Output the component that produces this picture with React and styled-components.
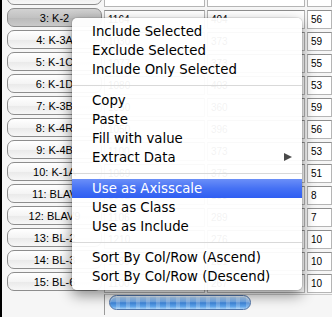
import React from 'react';
import styled, { createGlobalStyle } from 'styled-components';

const GlobalStyle = createGlobalStyle`
  html, body {
    margin: 0;
    padding: 0;
    background: #f6f6f6;
  }
  #root {
    width: 332px;
    height: 317px;
  }
`

const Window = styled.div`
  position: relative;
  display: flex;
  flex-direction: column;
  width: 330px;
  height: 317px;
  border-left: 2px solid #000;
  background: #f6f6f6;
  overflow: hidden;
  font-family: "Liberation Sans", Arial, sans-serif;
`

const Rows = styled.div`
  display: flex;
  flex-direction: column;
  margin-top: -14px;
  padding-left: 5px;
`

const Row = styled.div`
  display: grid;
  grid-template-columns: 95px 101px 98px 1fr;
  column-gap: 2px;
  align-items: start;
  height: 22px;
`

const RowButton = styled.div`
  display: flex;
  align-items: center;
  justify-content: center;
  height: 17px;
  border: 1px solid #8d8d8d;
  border-radius: 7px;
  background: ${p => p.$active
    ? 'linear-gradient(#d2d2d2, #c2c2c2 50%, #b9b9b9 51%, #cacaca)'
    : 'linear-gradient(#ffffff, #f4f4f4 50%, #e9e9e9 51%, #f7f7f7)'};
  color: #000;
  font-size: 11px;
  white-space: nowrap;
  overflow: hidden;
`

const Cell = styled.div`
  box-sizing: border-box;
  height: 19px;
  margin-top: 2px;
  padding: 3px 0 0 3px;
  background: #fff;
  border: 1px solid #b5b5b5;
  border-top-color: #8e8e8e;
  color: #000;
  font-size: 10px;
`

const Footer = styled.div`
  display: flex;
  align-items: flex-start;
  margin-left: 102px;
  height: 20px;
  border-top: 1px solid #c9c9c9;
  border-left: 1px solid #9a9a9a;
  padding: 0 0 0 4px;
`

const ProgressBar = styled.div`
  width: 140px;
  height: 13px;
  border: 1px solid #5074a8;
  border-radius: 8px;
  background:
    repeating-linear-gradient(90deg, rgba(255,255,255,0) 0 6px, rgba(255,255,255,0.22) 6px 10px),
    linear-gradient(#b9d8f7, #6ea8ea 45%, #3f86dc 52%, #5ea4ec 80%, #a8d2f8);
  box-shadow: inset 0 1px 1px rgba(255,255,255,0.6);
`

const Menu = styled.div`
  position: absolute;
  left: 70px;
  top: 18px;
  width: 230px;
  padding: 4px 0;
  background: rgba(255, 255, 255, 0.95);
  border-radius: 5px;
  box-shadow: 0 5px 14px rgba(0, 0, 0, 0.45), 0 0 0 1px rgba(0, 0, 0, 0.08);
  font-family: "DejaVu Sans", "Liberation Sans", sans-serif;
  font-size: 13.3px;
  color: #000;
`

const Item = styled.div`
  position: relative;
  display: flex;
  align-items: center;
  height: 19px;
  padding-left: 20px;
  color: ${p => p.$highlight ? '#fff' : '#000'};
  background: ${p => p.$highlight
    ? 'linear-gradient(#6b8ff8, #4571f4 50%, #2f5ef2)'
    : 'transparent'};
`

const Separator = styled.div`
  height: 12px;
  display: flex;
  align-items: center;
  &::after {
    content: '';
    flex: 1;
    height: 1px;
    background: #d9d9d9;
  }
`

const SubArrow = styled.span`
  position: absolute;
  right: 10px;
  top: 5px;
  width: 0;
  height: 0;
  border-top: 4.5px solid transparent;
  border-bottom: 4.5px solid transparent;
  border-left: 8px solid #4a4a4a;
`

// row 2 is scrolled almost out of view, so its texts are left blank
const rows = [
  { id: 2, label: '', a: '', b: '', c: '' },
  { id: 3, label: '3: K-2', a: '1164', b: '404', c: '56', active: true },
  { id: 4, label: '4: K-3A', a: '1030', b: '373', c: '59' },
  { id: 5, label: '5: K-1C', a: '1077', b: '373', c: '55' },
  { id: 6, label: '6: K-1D', a: '1080', b: '403', c: '53' },
  { id: 7, label: '7: K-3B', a: '1050', b: '360', c: '59' },
  { id: 8, label: '8: K-4R', a: '1050', b: '396', c: '56' },
  { id: 9, label: '9: K-4B', a: '1100', b: '373', c: '53' },
  { id: 10, label: '10: K-1A', a: '1069', b: '375', c: '51' },
  { id: 11, label: '11: BLAV', a: '1062', b: '183', c: '8' },
  { id: 12, label: '12: BLAV9', a: '1106', b: '289', c: '7' },
  { id: 13, label: '13: BL-2', a: '1210', b: '276', c: '10' },
  { id: 14, label: '14: BL-3', a: '1180', b: '281', c: '10' },
  { id: 15, label: '15: BL-6', a: '1100', b: '267', c: '10' },
];

const menu = [
  'Include Selected',
  'Exclude Selected',
  'Include Only Selected',
  '-',
  'Copy',
  'Paste',
  'Fill with value',
  { label: 'Extract Data', sub: true },
  '-',
  { label: 'Use as Axisscale', highlight: true },
  'Use as Class',
  'Use as Include',
  '-',
  'Sort By Col/Row (Ascend)',
  'Sort By Col/Row (Descend)',
];

const App = () => {
  return (
    <Window>
      <GlobalStyle />
      <Rows>
        {rows.map(r => (
          <Row key={r.id}>
            <RowButton $active={r.active}>{r.label}</RowButton>
            <Cell>{r.a}</Cell>
            <Cell>{r.b}</Cell>
            <Cell>{r.c}</Cell>
          </Row>
        ))}
      </Rows>
      <Footer>
        <ProgressBar />
      </Footer>
      <Menu>
        {menu.map((m, i) => {
          if (m === '-') return <Separator key={i} />;
          const item = typeof m === 'string' ? { label: m } : m;
          return (
            <Item key={i} $highlight={item.highlight}>
              {item.label}
              {item.sub && <SubArrow />}
            </Item>
          );
        })}
      </Menu>
    </Window>
  );
}

export default App;
